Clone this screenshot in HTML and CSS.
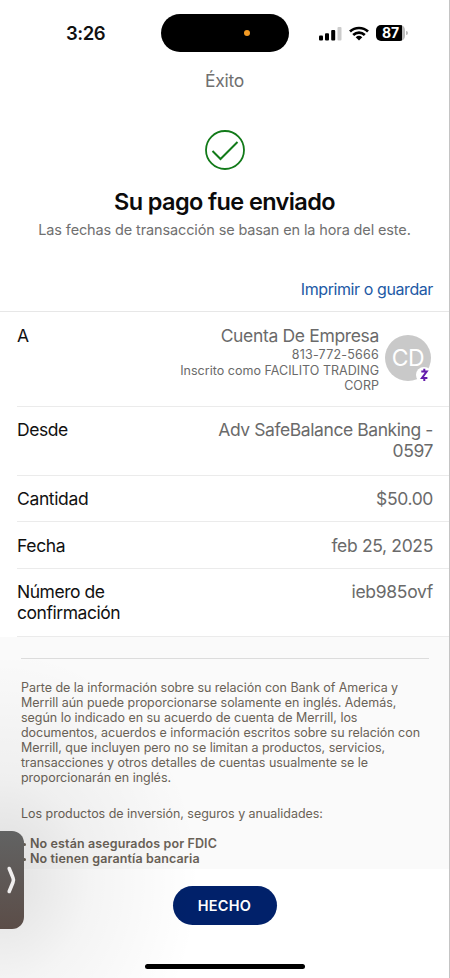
FILE: index.html
```html
<!DOCTYPE html>
<html lang="es">
<head>
<meta charset="utf-8">
<meta name="viewport" content="width=device-width, initial-scale=1">
<title>Éxito</title>
<link rel="stylesheet" href="styles.css">
</head>
<body>
<div class="screen">
  <header class="status">
    <span class="time">3:26</span>
    <div class="island"><i class="dot"></i></div>
    <div class="indicators">
      <svg class="signal" width="23" height="15" viewBox="0 0 23 15"><rect x="0" y="9.5" width="4" height="5" rx="1"/><rect x="6" y="7.3" width="4" height="7.2" rx="1"/><rect x="12.2" y="4" width="4" height="10.500" rx="1"/><rect x="18.500" y="1" width="4" height="13.500" rx="1" fill="#ccc"/></svg>
      <svg class="wifi" width="20" height="15" viewBox="0 0 20 15" fill="none" stroke="#000" stroke-width="2.700"><path d="M1 5.500C6 .8 14 .8 19 5.500"/><path d="M4.200 8.900C7.600 5.800 12.400 5.800 15.800 8.900"/><path d="M6.700 11.200Q10 8.500 13.300 11.200L10 14.600Z" fill="#000" stroke="none"/></svg>
      <div class="battery"><span>87</span></div>
    </div>
  </header>
  <div class="nav">Éxito</div>
  <section class="hero">
    <svg class="check" width="40" height="40" viewBox="0 0 40 40" fill="none" stroke="#127a19" stroke-width="1.800"><circle cx="20" cy="20" r="19"/><path d="M7.500 21L15.500 29L32.500 12" stroke-width="2"/></svg>
    <h1>Su pago fue enviado</h1>
    <p>Las fechas de transacción se basan en la hora del este.</p>
  </section>
  <div class="action"><a>Imprimir o guardar</a></div>
  <dl class="details">
    <div class="row payee">
      <dt>A</dt>
      <dd>
        <div class="person">
          <div class="name">Cuenta De Empresa</div>
          <div class="phone">813-772-5666</div>
          <div class="enrolled">Inscrito como FACILITO TRADING<br>CORP</div>
        </div>
        <div class="avatar"><span>CD</span>
          <svg class="badge" width="18" height="18" viewBox="0 0 18 18"><circle cx="9" cy="9" r="8" fill="#fff"/><path d="M9.300 2.800V5M9.300 12.500V15M6.300 5.500H11.700L7 12H12.400" fill="none" stroke="#651dac" stroke-width="2"/></svg>
        </div>
      </dd>
    </div>
    <div class="row from"><dt>Desde</dt><dd>Adv SafeBalance Banking -<br>0597</dd></div>
    <div class="row amount"><dt>Cantidad</dt><dd>$50.00</dd></div>
    <div class="row date"><dt>Fecha</dt><dd>feb 25, 2025</dd></div>
    <div class="row confirm"><dt>Número de<br>confirmación</dt><dd>ieb985ovf</dd></div>
  </dl>
  <section class="legal">
    <hr>
    <p>Parte de la información sobre su relación con Bank of America y<br>Merrill aún puede proporcionarse solamente en inglés. Además,<br>según lo indicado en su acuerdo de cuenta de Merrill, los<br>documentos, acuerdos e información escritos sobre su relación con<br>Merrill, que incluyen pero no se limitan a productos, servicios,<br>transacciones y otros detalles de cuentas usualmente se le<br>proporcionarán en inglés.</p>
    <p class="products">Los productos de inversión, seguros y anualidades:</p>
    <ul><li>No están asegurados por FDIC</li><li>No tienen garantía bancaria</li></ul>
  </section>
  <footer><button>HECHO</button><div class="home"></div></footer>
  <div class="shade"></div>
  <div class="drawer"><svg width="12" height="30" viewBox="0 0 12 30"><path d="M3.200 3.500L6.900 12.500Q8 15 6.900 17.500L3.200 26.500" fill="none" stroke="#f0eeee" stroke-width="3.600" stroke-linecap="round"/></svg></div>
</div>
</body>
</html>
```
FILE: styles.css
```css
* { box-sizing: border-box; margin: 0; padding: 0; }
body { width: 450px; height: 978px; overflow: hidden; font-family: Inter, "Liberation Sans", sans-serif; color: #111; background: #fff; }
.screen { position: relative; width: 450px; height: 978px; display: flex; flex-direction: column; border-right: 1px solid #c4c4c4; white-space: nowrap; }
.status { height: 66px; flex: none; display: grid; grid-template-columns: 161px 128px 160px; align-items: center; }
.time { padding-left: 66px; font-size: 18.500px; font-weight: 600; letter-spacing: -.5px; }
.island { height: 38px; border-radius: 19px; background: #000; display: flex; align-items: center; padding-left: 83px; }
.dot { width: 6px; height: 6px; border-radius: 50%; background: #f29a24; }
.indicators { display: flex; align-items: center; padding-left: 30px; }
.wifi { margin-left: 7px; }
.battery { position: relative; margin-left: 7px; width: 29px; height: 16px; border-radius: 5px; background: linear-gradient(90deg, #000 26px, #bbb 26px); color: #fff; font-size: 14px; line-height: 16px; font-weight: 700; text-align: center; letter-spacing: -.2px; }
.battery::after { content: ""; position: absolute; left: 29.500px; top: 6px; width: 2px; height: 4px; background: #bbb; border-radius: 0 2px 2px 0; }
.nav { height: 30px; flex: none; line-height: 30px; text-align: center; font-size: 17.500px; color: #707070; letter-spacing: -.3px; }
.hero { height: 174px; flex: none; display: flex; flex-direction: column; align-items: center; padding-top: 34px; }
h1 { margin-top: 17px; line-height: 30px; font-size: 23.500px; font-weight: 600; letter-spacing: -.62px; color: #0b0b0b; }
.hero p { margin-top: 3px; line-height: 20px; font-size: 14.500px; color: #707070; letter-spacing: -.13px; }
.action { height: 42px; flex: none; border-bottom: 1px solid #e7e7e7; padding: 8px 16px 0 0; text-align: right; line-height: 22px; font-size: 16px; letter-spacing: -.41px; color: #2159a5; }
.details { height: 325px; flex: none; }
.row { margin-left: 17px; padding: 12px 16px 0 0; border-bottom: 1px solid #ebebeb; display: flex; justify-content: space-between; font-size: 17.500px; line-height: 21px; letter-spacing: -.3px; }
dd { color: #6a6a6a; text-align: right; }
.payee { height: 95px; padding-top: 13px; padding-right: 18px; }
.payee dd { display: flex; }
.from { height: 69px; letter-spacing: -.42px; }
.amount { height: 46px; letter-spacing: -.36px; }
.date { height: 47px; padding-top: 13px; letter-spacing: -.34px; }
.confirm { height: 68px; }
.confirm dt { letter-spacing: -.46px; }
.person { padding-right: 6px; }
.name { letter-spacing: -.34px; }
.phone, .enrolled { font-size: 12.500px; line-height: 15px; letter-spacing: .03px; }
.phone { line-height: 17px; letter-spacing: .22px; }
.avatar { position: relative; width: 46px; height: 46px; margin-top: 10px; border-radius: 50%; background: #c9c9c9; color: #fff; font-size: 23px; line-height: 46px; text-align: center; letter-spacing: -.5px; }
.badge { position: absolute; left: 30px; top: 31px; }
.legal { height: 232px; flex: none; padding: 21px 20px 0 21px; background: #fafafa; color: #6a6257; font-size: 12.500px; line-height: 15px; letter-spacing: -.03px; }
hr { border: 0; height: 1px; background: #dcdcdc; margin-bottom: 21px; }
.products { margin-top: 21px; }
ul { list-style: none; margin-top: 15px; font-weight: 600; letter-spacing: .11px; }
li { padding-left: 9px; position: relative; }
li::before { content: ""; position: absolute; left: 2px; top: 7px; width: 3px; height: 3px; border-radius: 50%; background: #6a6257; }
footer { height: 109px; flex: none; display: flex; flex-direction: column; align-items: center; padding-top: 17px; }
button { width: 104px; height: 39px; border: 0; border-radius: 20px; background: #01216a; color: #fff; font: 600 14.500px Inter, sans-serif; letter-spacing: .25px; }
.home { width: 160px; height: 5px; margin-top: 39px; border-radius: 3px; background: #000; }
.shade { position: absolute; left: 0; top: 660px; width: 220px; height: 318px; background: radial-gradient(ellipse 200px 230px at 0 220px, rgba(0,0,0,.12), rgba(0,0,0,.045) 45%, transparent); pointer-events: none; }
.drawer { position: absolute; left: 0; top: 831px; width: 24px; height: 98px; border-radius: 0 12px 12px 0; background: linear-gradient(#626363, #5b4d48); display: flex; align-items: center; padding-left: 6px; }
```
